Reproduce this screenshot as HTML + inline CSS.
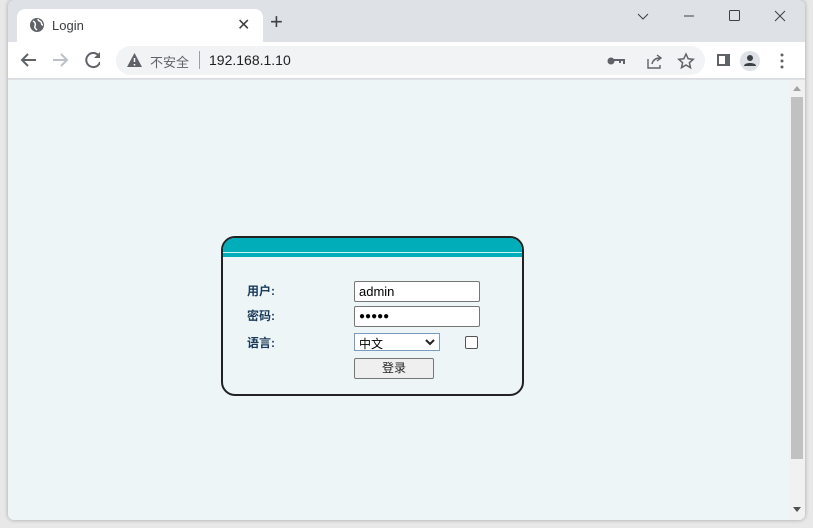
<!DOCTYPE html>
<html><head><meta charset="utf-8"><style>
*{margin:0;padding:0;box-sizing:border-box}
body{width:813px;height:528px;overflow:hidden;background:#e8e8e8;font-family:"Liberation Sans","Noto Sans CJK SC",sans-serif;position:relative}
.win{position:absolute;left:8px;top:0;width:797px;height:520px;border-radius:6px;overflow:hidden;background:#dee1e6;box-shadow:0 0 4px rgba(0,0,0,.3)}
.tab{position:absolute;left:9px;top:9px;width:246px;height:34px;background:#fff;border-radius:8px 8px 0 0}
.toolbar{position:absolute;left:0;top:42px;width:797px;height:37px;background:#fff;border-bottom:1px solid #dadce0}
.omni{position:absolute;left:108px;top:4px;width:589px;height:29px;background:#f1f3f4;border-radius:15px}
.page{position:absolute;left:0;top:80px;width:781px;height:440px;background:#edf5f7}
.sb{position:absolute;left:781px;top:80px;width:16px;height:440px;background:#f1f1f1}
.thumb{position:absolute;left:2px;top:17px;width:12px;height:362px;background:#c1c1c1}
.box{position:absolute;left:213px;top:156px;width:303px;height:160px;border:2px solid #222;border-radius:14px;overflow:hidden;background:#edf5f7}
.lbl{position:absolute;left:24px;font-size:12px;font-weight:bold;color:#1a3a5a}
.inp{position:absolute;left:131px;width:126px;height:21px;border:1px solid #767676;border-radius:2px;background:#fff;font-size:13px;padding:2px 4px}
</style></head><body>
<div class="win">
 <div class="tab">
  <svg style="position:absolute;left:12px;top:8px" width="16" height="16" viewBox="0 0 16 16"><circle cx="8" cy="8" r="7" fill="#5f6368"/><path d="M4 4c2 1 3 3 2 5s1 3 2 4M9 2c0 2 2 2 3 3s0 3 2 3" stroke="#fff" stroke-width="1.5" fill="none"/></svg>
  <span style="position:absolute;left:35px;top:9px;font-size:13px;color:#3c4043">Login</span>
  <span style="position:absolute;left:220px;top:6px;font-size:16px;color:#3c4043">✕</span>
 </div>
 <span style="position:absolute;left:262px;top:11px;font-size:22px;color:#3c4043;line-height:22px">+</span>
 <svg style="position:absolute;left:628px;top:8px" width="160" height="16" viewBox="0 0 160 16"><path d="M2 6l5 5 5-5" stroke="#3c4043" fill="none"/><path d="M48 8h10" stroke="#3c4043"/><rect x="93.5" y="2.5" width="10" height="10" rx="1" stroke="#3c4043" fill="none"/><path d="M139 3l10 10M149 3l-10 10" stroke="#3c4043"/></svg>
 <div class="toolbar">
  <svg style="position:absolute;left:12px;top:9px" width="80" height="18" viewBox="0 0 80 18"><path d="M16 9H3M8 3L2 9l6 6" stroke="#5f6368" stroke-width="2" fill="none"/><path d="M33 9h13M41 3l6 6-6 6" stroke="#bdc1c6" stroke-width="2" fill="none"/><path d="M79 5a7 7 0 1 0 1 6" stroke="#5f6368" stroke-width="2" fill="none"/><path d="M80 1v6h-6z" fill="#5f6368"/></svg>
  <div class="omni">
   <svg style="position:absolute;left:11px;top:7px" width="15" height="14" viewBox="0 0 15 14"><path d="M7.5 0L15 14H0z" fill="#5f6368"/><path d="M7.5 5v4M7.5 11v1.5" stroke="#fff" stroke-width="1.5"/></svg>
   <span style="position:absolute;left:34px;top:6px;font-size:13px;color:#5f6368">不安全</span>
   <span style="position:absolute;left:83px;top:5px;width:1px;height:18px;background:#9aa0a6"></span>
   <span style="position:absolute;left:93px;top:6px;font-size:14px;color:#202124">192.168.1.10</span>
   <svg style="position:absolute;left:490px;top:6px" width="90" height="18" viewBox="0 0 90 18"><circle cx="5" cy="9" r="3.5" fill="#5f6368"/><path d="M8 8h10v4M14 8v3" stroke="#5f6368" stroke-width="2" fill="none"/><path d="M42 7v9h12v-3M46 12c1-4 4-6 8-6M51 3l4 3-4 3" stroke="#5f6368" stroke-width="1.4" fill="none"/><path d="M80 2l2.2 4.8 5 .5-3.8 3.4 1.1 5-4.5-2.7-4.5 2.7 1.1-5-3.8-3.4 5-.5z" stroke="#5f6368" stroke-width="1.5" fill="none"/></svg>
  </div>
  <svg style="position:absolute;left:708px;top:9px" width="84" height="20" viewBox="0 0 84 20"><rect x="1" y="3" width="13" height="12" fill="#5f6368"/><rect x="3" y="5" width="6" height="8" fill="#fff"/><circle cx="34" cy="10" r="10" fill="#dee1e6"/><circle cx="34" cy="7" r="3" fill="#3c4043"/><path d="M28 15c0-4 12-4 12 0z" fill="#3c4043"/><circle cx="66" cy="4" r="1.5" fill="#5f6368"/><circle cx="66" cy="10" r="1.5" fill="#5f6368"/><circle cx="66" cy="16" r="1.5" fill="#5f6368"/></svg>
 </div>
 <div class="page">
  <div class="box">
   <div style="height:14px;background:#00adb8"></div><div style="height:1px;background:#c8f4f4"></div><div style="height:4px;background:#00adb8"></div>
   <span class="lbl" style="top:44px">用户:</span>
   <span class="lbl" style="top:69px">密码:</span>
   <span class="lbl" style="top:96px">语言:</span>
   <div class="inp" style="top:43px">admin</div>
   <div class="inp" style="top:68px;font-size:10px;padding-top:4px">●●●●●</div>
   <div style="position:absolute;left:131px;top:95px;width:86px;height:18px;border:1px solid #7a9cc0;background:#fff;font-size:12px;padding:1px 4px">中文<svg style="position:absolute;right:4px;top:5px" width="10" height="7" viewBox="0 0 10 7"><path d="M1 1l4 4 4-4" stroke="#222" stroke-width="2" fill="none"/></svg></div>
   <div style="position:absolute;left:242px;top:98px;width:13px;height:13px;border:1px solid #555;border-radius:2px;background:#fff"></div>
   <div style="position:absolute;left:131px;top:120px;width:80px;height:21px;border:1px solid #767676;border-radius:2px;background:#efefef;font-size:12px;text-align:center;line-height:19px;color:#222">登录</div>
  </div>
 </div>
 <div class="sb"><div style="position:absolute;left:4px;top:6px;border:4px solid transparent;border-bottom:5px solid #a3a3a3;border-top:0"></div><div class="thumb"></div><div style="position:absolute;left:4px;top:427px;border:4px solid transparent;border-top:5px solid #505050;border-bottom:0"></div></div>
</div>
</body></html>
